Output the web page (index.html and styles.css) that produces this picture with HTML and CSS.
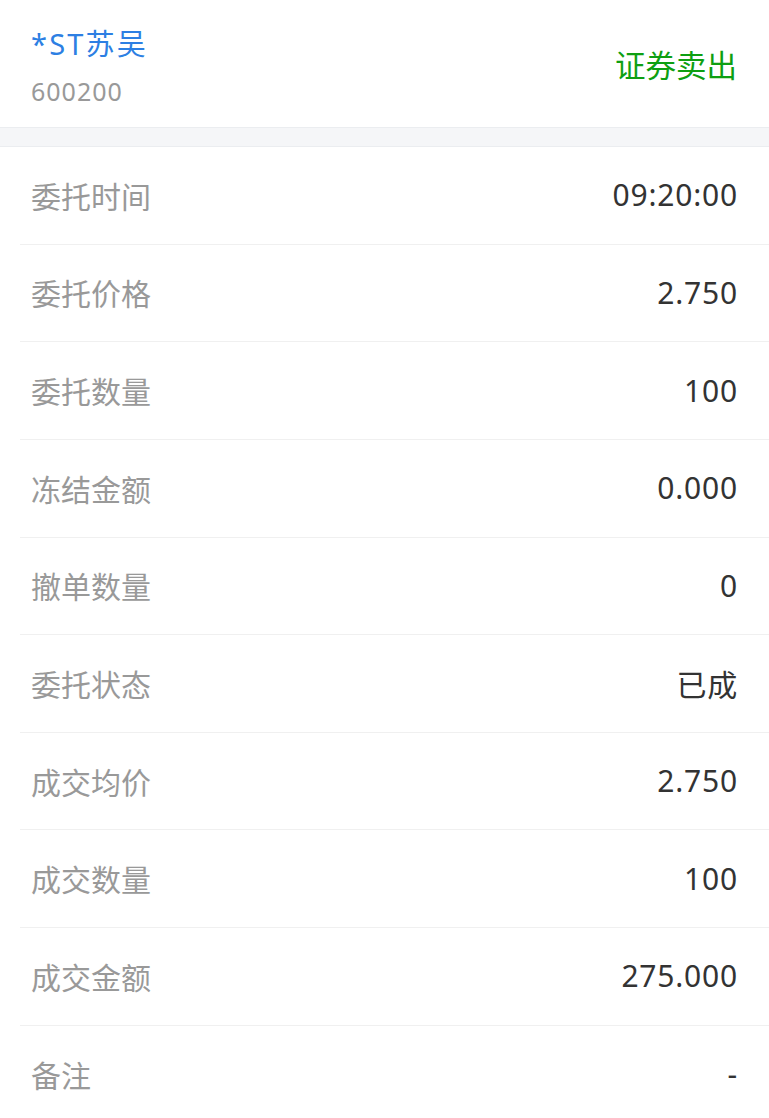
FILE: index.html
```html
<!DOCTYPE html>
<html lang="zh-CN">

<head>
    <meta charset="UTF-8">
    <meta name="viewport" content="width=device-width, initial-scale=1.0">
    <title>委托详情</title>
    <link rel="stylesheet" href="styles.css">
</head>

<body>

    <div class="header">
        <div class="stock">
            <div class="stock-name">*ST苏吴</div>
            <div class="stock-code">600200</div>
        </div>
        <div class="trade-type">证券卖出</div>
    </div>

    <div class="gap"></div>

    <div class="detail-list">
        <div class="row"><span class="label">委托时间</span><span class="value">09:20:00</span></div>
        <div class="row"><span class="label">委托价格</span><span class="value">2.750</span></div>
        <div class="row"><span class="label">委托数量</span><span class="value">100</span></div>
        <div class="row"><span class="label">冻结金额</span><span class="value">0.000</span></div>
        <div class="row"><span class="label">撤单数量</span><span class="value">0</span></div>
        <div class="row"><span class="label">委托状态</span><span class="value">已成</span></div>
        <div class="row"><span class="label">成交均价</span><span class="value">2.750</span></div>
        <div class="row"><span class="label">成交数量</span><span class="value">100</span></div>
        <div class="row"><span class="label">成交金额</span><span class="value">275.000</span></div>
        <div class="row"><span class="label">备注</span><span class="value">-</span></div>
    </div>

</body>

</html>
```

FILE: styles.css
```css
body {
    font-family: "Noto Sans", "Noto Sans CJK SC", sans-serif;
    background-color: #fff;
    margin: 0;
    padding: 0;
}

.header {
    height: 127px;
    display: flex;
    justify-content: space-between;
    align-items: center;
    padding: 0 32px 0 31px;
    box-sizing: border-box;
}

.stock {
    display: flex;
    flex-direction: column;
    padding-top: 5px;
}

.stock-name {
    color: #2d7fe3;
    font-size: 29px;
    line-height: 40px;
    letter-spacing: 2.2px;
}

.stock-code {
    color: #999;
    font-size: 25px;
    line-height: 34px;
    margin-top: 10px;
    letter-spacing: 1px;
}

.trade-type {
    color: #0e9f12;
    font-size: 30.5px;
}

.gap {
    height: 20px;
    background-color: #f5f6f8;
    border-top: 1px solid #ebedf0;
    border-bottom: 1px solid #ebedf0;
    box-sizing: border-box;
}

.detail-list {
    padding-left: 20px;
}

.row {
    height: 97.625px;
    box-sizing: border-box;
    display: flex;
    justify-content: space-between;
    align-items: center;
    padding: 0 31px 1px 11px;
    border-bottom: 1px solid #f0f0f0;
}

.row:last-child {
    border-bottom: none;
}

.label {
    color: #999;
    font-size: 30px;
}

.value {
    color: #333;
    font-size: 30px;
    letter-spacing: 0.8px;
}
```
